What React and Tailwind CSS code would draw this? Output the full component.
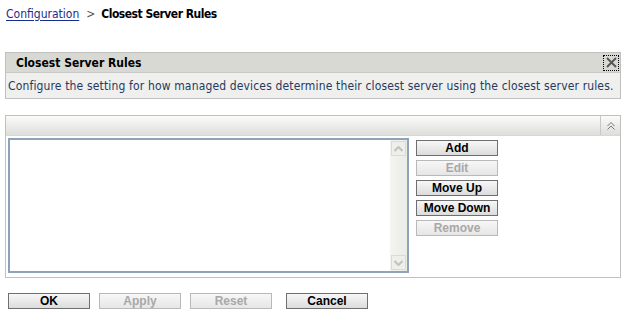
import React from "react";

const btnOn =
  "w-[82px] h-[16px] flex items-center justify-center border border-[#6f6f6f] bg-gradient-to-b from-[#f7f7f7] to-[#dcdcdc] text-[12px] font-bold text-black leading-none";
const btnOff =
  "w-[82px] h-[16px] flex items-center justify-center border border-[#b9b9b9] bg-gradient-to-b from-[#f7f7f7] to-[#e6e6e6] text-[12px] font-bold text-[#a8a8a8] leading-none";

export default function App() {
  return (
    <div className="w-[626px] h-[316px] bg-white relative overflow-hidden" style={{ fontFamily: "'DejaVu Sans Condensed', 'DejaVu Sans', sans-serif" }}>
      {/* breadcrumb */}
      <div className="flex items-center pl-[6px] pt-[5px] h-[22px] text-[12px]">
        <span className="text-[#1b2d8a] underline underline-offset-2">Configuration</span>
        <span className="ml-[7px] mr-[6px] text-[#555] text-[12px]">&gt;</span>
        <span className="font-bold text-black tracking-[-0.5px]">Closest Server Rules</span>
      </div>

      {/* panel 1 */}
      <div className="mt-[30px] ml-[5px] w-[616px] border border-[#c0c0c0]">
        <div className="h-[19px] bg-[#d9d9d4] flex items-center justify-between pl-[10px] pr-[1px]">
          <span className="font-bold text-[12px] text-black">Closest Server Rules</span>
          <span className="w-[16px] h-[16px] border border-dotted border-black flex items-center justify-center">
            <svg width="11" height="11" viewBox="0 0 11 11"><path d="M1 1L10 10M10 1L1 10" stroke="#555" strokeWidth="1.8" /></svg>
          </span>
        </div>
        <div className="h-[26px] bg-[#efefed] border-t border-[#c8c8c8] flex items-center pl-[2px] text-[12px] tracking-[0.15px] text-[#233a63] whitespace-nowrap">
          Configure the setting for how managed devices determine their closest server using the closest server rules.
        </div>
      </div>

      {/* panel 2 */}
      <div className="mt-[16px] ml-[5px] w-[616px] h-[163px] border border-[#c0c0c0] flex flex-col">
        <div className="h-[20px] bg-gradient-to-b from-[#fbfbfb] to-[#dededb] flex justify-end border-b border-[#d8d8d8]">
          <div className="w-[20px] border-l border-[#c8c8c8] flex items-center justify-center">
            <svg width="10" height="10" viewBox="0 0 10 10" fill="none" stroke="#777" strokeWidth="1"><path d="M1.5 5L5 1.5L8.5 5M1.5 8.5L5 5L8.5 8.5" /></svg>
          </div>
        </div>
        <div className="flex pl-[2px] pt-[2px]">
          <div className="w-[401px] h-[135px] border-2 border-[#8ea2ba] flex justify-end">
            <div className="w-[17px] h-full bg-gradient-to-r from-[#f4f4f0] to-[#ecece6] flex flex-col justify-between items-center py-[1px]">
              <div className="w-[15px] h-[15px] border border-[#dcdcd6] bg-[#efefea] flex items-center justify-center">
                <svg width="9" height="6" viewBox="0 0 9 6"><path d="M0.5 5L4.5 1L8.5 5" fill="none" stroke="#c2c2bc" strokeWidth="2" /></svg>
              </div>
              <div className="w-[15px] h-[15px] border border-[#dcdcd6] bg-[#efefea] flex items-center justify-center">
                <svg width="9" height="6" viewBox="0 0 9 6"><path d="M0.5 1L4.5 5L8.5 1" fill="none" stroke="#c2c2bc" strokeWidth="2" /></svg>
              </div>
            </div>
          </div>
          <div className="ml-[7px] mt-[2px] flex flex-col gap-[4px]" style={{ fontFamily: "'Liberation Sans', Arial, sans-serif" }}>
            <div className={btnOn}>Add</div>
            <div className={btnOff}>Edit</div>
            <div className={btnOn}>Move Up</div>
            <div className={btnOn}>Move Down</div>
            <div className={btnOff}>Remove</div>
          </div>
        </div>
      </div>

      {/* bottom buttons */}
      <div className="mt-[15px] ml-[8px] flex gap-[9px]" style={{ fontFamily: "'Liberation Sans', Arial, sans-serif" }}>
        <div className={btnOn}>OK</div>
        <div className={btnOff}>Apply</div>
        <div className={btnOff}>Reset</div>
        <div className={btnOn + " ml-[5px]"}>Cancel</div>
      </div>
    </div>
  );
}
